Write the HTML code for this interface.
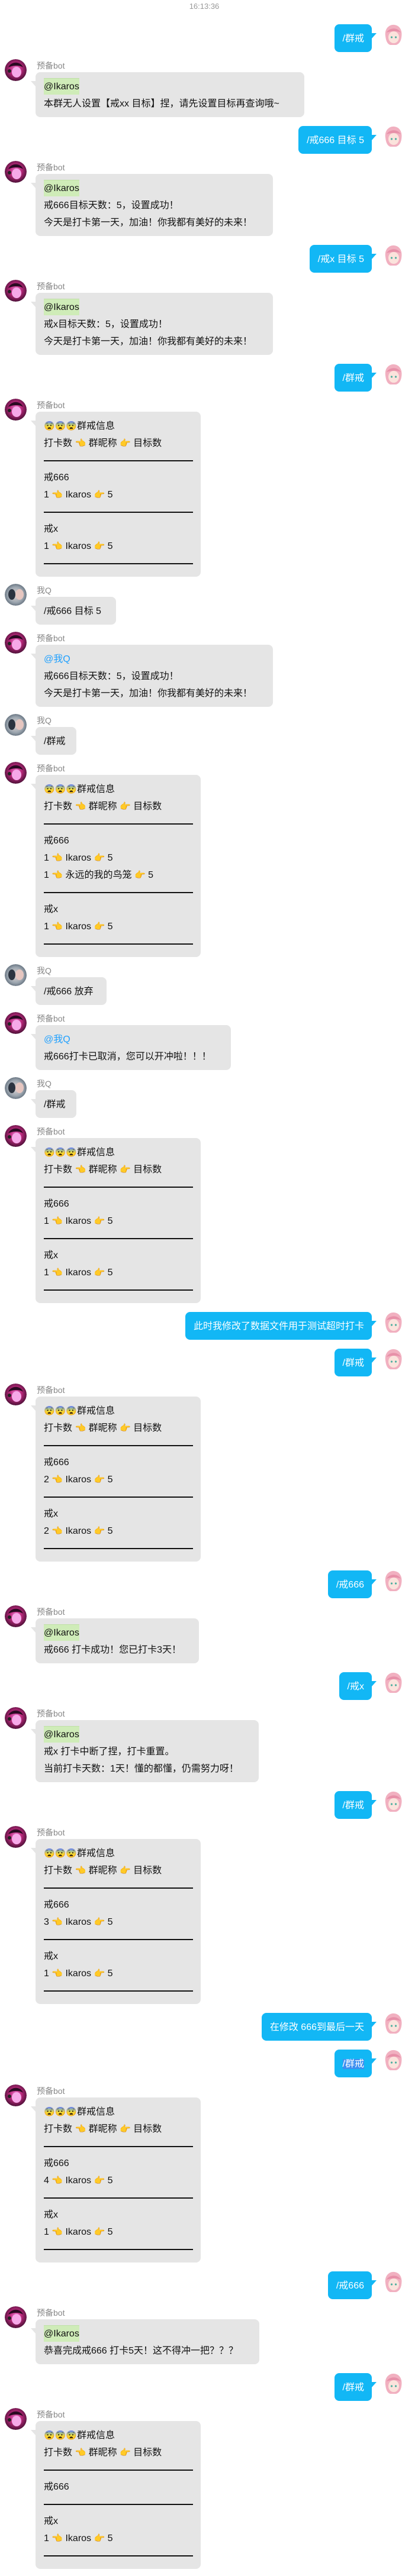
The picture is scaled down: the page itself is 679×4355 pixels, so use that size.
<!DOCTYPE html>
<html><head><meta charset="utf-8">
<style>
*{margin:0;padding:0;box-sizing:border-box}
html,body{width:679px;height:4355px;overflow:hidden;background:#fff}
body{font-family:"Liberation Sans","Noto Sans CJK SC",sans-serif;font-size:16px;color:#111;position:relative}
.ts{position:absolute;top:0;left:0;width:690px;text-align:center;font-size:13px;line-height:22px;color:#999}
.wrap{padding-top:26px}
.b{position:relative;margin-top:12px;padding-left:60px}
.b .av{position:absolute;left:8px;top:0;width:37px;height:37px;border-radius:50%;overflow:hidden}
.nm{height:22px;line-height:22px;font-size:14px;color:#888;padding-left:2px;overflow:hidden}
.bb{position:relative;border-radius:8px;padding:10px 12px 8px 14px;line-height:29px;white-space:nowrap}
.l{height:29px;line-height:29px;overflow:visible}
.l span.e,.l .h{display:inline-block;height:29px;line-height:29px;vertical-align:top;font-size:15px}
.b .bb{background:#e5e5e5;display:block}
.b .bb::before{content:"";position:absolute;left:-8px;top:15px;border-top:9px solid #e5e5e5;border-left:8px solid transparent}
.u{position:relative;margin-top:15px;height:47px}
.u .bb{position:absolute;right:51px;top:0;height:47px;background:#12b7f5;color:#fff;padding:10px 13px 8px 14px}
.u .bb::after{content:"";position:absolute;right:-8px;top:15px;border-top:9px solid #12b7f5;border-right:8px solid transparent}
.u .ua{position:absolute;right:-4px;top:-2px;width:38px;height:40px}
.at{background:#cfecb8;display:inline-block;line-height:27px;height:28px;border-top:1px solid #bfe0a6;vertical-align:top}
.atq{color:#1ea0ff}
.hr{height:29px;position:relative}
.hr::after{content:"";position:absolute;left:0;top:14px;width:252px;height:1.5px;background:#111}
.sel{background:#3d8ff0}
</style></head><body>
<div class="ts">16:13:36</div>

<svg width="0" height="0" style="position:absolute">
<defs>
<radialGradient id="gb" cx="50%" cy="45%" r="60%"><stop offset="0" stop-color="#f07ad0"/><stop offset="0.45" stop-color="#b8287a"/><stop offset="1" stop-color="#3a0c2c"/></radialGradient>
<radialGradient id="gq" cx="50%" cy="50%" r="60%"><stop offset="0" stop-color="#e8dcd8"/><stop offset="0.6" stop-color="#9aa4ae"/><stop offset="1" stop-color="#4a5866"/></radialGradient>
<g id="uav"><path d="M6 22 C4 8 14 2 21 3 C30 4 35 12 33 24 C32 32 28 36 24 37 L14 37 C9 35 7 30 6 22Z" fill="#f1b0c0"/><ellipse cx="20" cy="24" rx="9" ry="10" fill="#fbe3dc"/><path d="M8 16 C12 8 26 6 32 16 C26 13 16 13 8 16Z" fill="#e790a8"/><circle cx="16.5" cy="24" r="1.6" fill="#4fb0a0"/><circle cx="23.5" cy="24" r="1.6" fill="#4fb0a0"/></g>
<g id="bav"><circle cx="18.5" cy="18.5" r="18.5" fill="url(#gb)"/><ellipse cx="20" cy="22" rx="8" ry="9" fill="#f6a8e8"/><path d="M6 14 C10 4 26 2 31 14 C26 10 14 10 6 14Z" fill="#2a0a22"/><circle cx="8" cy="20" r="3" fill="#222"/></g>
<g id="qav"><circle cx="18.5" cy="18.5" r="18.5" fill="url(#gq)"/><ellipse cx="12" cy="18" rx="6" ry="9" fill="#2c3440"/><ellipse cx="25" cy="18" rx="7" ry="9" fill="#e6c6c0"/></g>
</defs></svg>

<div class="wrap">

<div class="u"><div class="bb">/群戒</div><svg class="ua" viewBox="0 0 38 40"><use href="#uav"/></svg></div>

<div class="b"><svg class="av" viewBox="0 0 37 37"><use href="#bav"/></svg><div class="nm">预备bot</div>
<div class="bb" style="width:454px"><div class="l"><span class="at">@Ikaros</span></div><div class="l">本群无人设置【戒xx 目标】捏，请先设置目标再查询哦~</div></div></div>

<div class="u"><div class="bb">/戒666 目标 5</div><svg class="ua" viewBox="0 0 38 40"><use href="#uav"/></svg></div>

<div class="b"><svg class="av" viewBox="0 0 37 37"><use href="#bav"/></svg><div class="nm">预备bot</div>
<div class="bb" style="width:401px"><div class="l"><span class="at">@Ikaros</span></div><div class="l">戒666目标天数：5，设置成功！</div><div class="l">今天是打卡第一天，加油！你我都有美好的未来！</div></div></div>

<div class="u"><div class="bb">/戒x 目标 5</div><svg class="ua" viewBox="0 0 38 40"><use href="#uav"/></svg></div>

<div class="b"><svg class="av" viewBox="0 0 37 37"><use href="#bav"/></svg><div class="nm">预备bot</div>
<div class="bb" style="width:401px"><div class="l"><span class="at">@Ikaros</span></div><div class="l">戒x目标天数：5，设置成功！</div><div class="l">今天是打卡第一天，加油！你我都有美好的未来！</div></div></div>

<div class="u"><div class="bb">/群戒</div><svg class="ua" viewBox="0 0 38 40"><use href="#uav"/></svg></div>

<div class="b"><svg class="av" viewBox="0 0 37 37"><use href="#bav"/></svg><div class="nm">预备bot</div>
<div class="bb" style="width:279px"><div class="l"><span class="e">😨😨😨</span>群戒信息</div><div class="l">打卡数 <span class="h">👈</span> 群昵称 <span class="h">👉</span> 目标数</div><div class="hr"></div><div class="l">戒666</div><div class="l">1 <span class="h">👈</span> Ikaros <span class="h">👉</span> 5</div><div class="hr"></div><div class="l">戒x</div><div class="l">1 <span class="h">👈</span> Ikaros <span class="h">👉</span> 5</div><div class="hr"></div></div></div>

<div class="b"><svg class="av" viewBox="0 0 37 37"><use href="#qav"/></svg><div class="nm">我Q</div>
<div class="bb" style="width:136px"><div class="l">/戒666 目标 5</div></div></div>

<div class="b"><svg class="av" viewBox="0 0 37 37"><use href="#bav"/></svg><div class="nm">预备bot</div>
<div class="bb" style="width:401px"><div class="l"><span class="atq">@我Q</span></div><div class="l">戒666目标天数：5，设置成功！</div><div class="l">今天是打卡第一天，加油！你我都有美好的未来！</div></div></div>

<div class="b"><svg class="av" viewBox="0 0 37 37"><use href="#qav"/></svg><div class="nm">我Q</div>
<div class="bb" style="width:69px"><div class="l">/群戒</div></div></div>

<div class="b"><svg class="av" viewBox="0 0 37 37"><use href="#bav"/></svg><div class="nm">预备bot</div>
<div class="bb" style="width:279px"><div class="l"><span class="e">😨😨😨</span>群戒信息</div><div class="l">打卡数 <span class="h">👈</span> 群昵称 <span class="h">👉</span> 目标数</div><div class="hr"></div><div class="l">戒666</div><div class="l">1 <span class="h">👈</span> Ikaros <span class="h">👉</span> 5</div><div class="l">1 <span class="h">👈</span> 永远的我的鸟笼 <span class="h">👉</span> 5</div><div class="hr"></div><div class="l">戒x</div><div class="l">1 <span class="h">👈</span> Ikaros <span class="h">👉</span> 5</div><div class="hr"></div></div></div>

<div class="b"><svg class="av" viewBox="0 0 37 37"><use href="#qav"/></svg><div class="nm">我Q</div>
<div class="bb" style="width:120px"><div class="l">/戒666 放弃</div></div></div>

<div class="b"><svg class="av" viewBox="0 0 37 37"><use href="#bav"/></svg><div class="nm">预备bot</div>
<div class="bb" style="width:330px"><div class="l"><span class="atq">@我Q</span></div><div class="l">戒666打卡已取消，您可以开冲啦！！！</div></div></div>

<div class="b"><svg class="av" viewBox="0 0 37 37"><use href="#qav"/></svg><div class="nm">我Q</div>
<div class="bb" style="width:69px"><div class="l">/群戒</div></div></div>

<div class="b"><svg class="av" viewBox="0 0 37 37"><use href="#bav"/></svg><div class="nm">预备bot</div>
<div class="bb" style="width:279px"><div class="l"><span class="e">😨😨😨</span>群戒信息</div><div class="l">打卡数 <span class="h">👈</span> 群昵称 <span class="h">👉</span> 目标数</div><div class="hr"></div><div class="l">戒666</div><div class="l">1 <span class="h">👈</span> Ikaros <span class="h">👉</span> 5</div><div class="hr"></div><div class="l">戒x</div><div class="l">1 <span class="h">👈</span> Ikaros <span class="h">👉</span> 5</div><div class="hr"></div></div></div>

<div class="u"><div class="bb">此时我修改了数据文件用于测试超时打卡</div><svg class="ua" viewBox="0 0 38 40"><use href="#uav"/></svg></div>

<div class="u"><div class="bb">/群戒</div><svg class="ua" viewBox="0 0 38 40"><use href="#uav"/></svg></div>

<div class="b"><svg class="av" viewBox="0 0 37 37"><use href="#bav"/></svg><div class="nm">预备bot</div>
<div class="bb" style="width:279px"><div class="l"><span class="e">😨😨😨</span>群戒信息</div><div class="l">打卡数 <span class="h">👈</span> 群昵称 <span class="h">👉</span> 目标数</div><div class="hr"></div><div class="l">戒666</div><div class="l">2 <span class="h">👈</span> Ikaros <span class="h">👉</span> 5</div><div class="hr"></div><div class="l">戒x</div><div class="l">2 <span class="h">👈</span> Ikaros <span class="h">👉</span> 5</div><div class="hr"></div></div></div>

<div class="u"><div class="bb">/戒666</div><svg class="ua" viewBox="0 0 38 40"><use href="#uav"/></svg></div>

<div class="b"><svg class="av" viewBox="0 0 37 37"><use href="#bav"/></svg><div class="nm">预备bot</div>
<div class="bb" style="width:276px"><div class="l"><span class="at">@Ikaros</span></div><div class="l">戒666 打卡成功！您已打卡3天！</div></div></div>

<div class="u"><div class="bb">/戒x</div><svg class="ua" viewBox="0 0 38 40"><use href="#uav"/></svg></div>

<div class="b"><svg class="av" viewBox="0 0 37 37"><use href="#bav"/></svg><div class="nm">预备bot</div>
<div class="bb" style="width:377px"><div class="l"><span class="at">@Ikaros</span></div><div class="l">戒x 打卡中断了捏，打卡重置。</div><div class="l">当前打卡天数：1天！懂的都懂，仍需努力呀！</div></div></div>

<div class="u"><div class="bb">/群戒</div><svg class="ua" viewBox="0 0 38 40"><use href="#uav"/></svg></div>

<div class="b"><svg class="av" viewBox="0 0 37 37"><use href="#bav"/></svg><div class="nm">预备bot</div>
<div class="bb" style="width:279px"><div class="l"><span class="e">😨😨😨</span>群戒信息</div><div class="l">打卡数 <span class="h">👈</span> 群昵称 <span class="h">👉</span> 目标数</div><div class="hr"></div><div class="l">戒666</div><div class="l">3 <span class="h">👈</span> Ikaros <span class="h">👉</span> 5</div><div class="hr"></div><div class="l">戒x</div><div class="l">1 <span class="h">👈</span> Ikaros <span class="h">👉</span> 5</div><div class="hr"></div></div></div>

<div class="u"><div class="bb">在修改 666到最后一天</div><svg class="ua" viewBox="0 0 38 40"><use href="#uav"/></svg></div>

<div class="u"><div class="bb"><span class="sel">/群戒</span></div><svg class="ua" viewBox="0 0 38 40"><use href="#uav"/></svg></div>

<div class="b"><svg class="av" viewBox="0 0 37 37"><use href="#bav"/></svg><div class="nm">预备bot</div>
<div class="bb" style="width:279px"><div class="l"><span class="e">😨😨😨</span>群戒信息</div><div class="l">打卡数 <span class="h">👈</span> 群昵称 <span class="h">👉</span> 目标数</div><div class="hr"></div><div class="l">戒666</div><div class="l">4 <span class="h">👈</span> Ikaros <span class="h">👉</span> 5</div><div class="hr"></div><div class="l">戒x</div><div class="l">1 <span class="h">👈</span> Ikaros <span class="h">👉</span> 5</div><div class="hr"></div></div></div>

<div class="u"><div class="bb">/戒666</div><svg class="ua" viewBox="0 0 38 40"><use href="#uav"/></svg></div>

<div class="b"><svg class="av" viewBox="0 0 37 37"><use href="#bav"/></svg><div class="nm">预备bot</div>
<div class="bb" style="width:378px"><div class="l"><span class="at">@Ikaros</span></div><div class="l">恭喜完成戒666 打卡5天！这不得冲一把？？？</div></div></div>

<div class="u"><div class="bb">/群戒</div><svg class="ua" viewBox="0 0 38 40"><use href="#uav"/></svg></div>

<div class="b"><svg class="av" viewBox="0 0 37 37"><use href="#bav"/></svg><div class="nm">预备bot</div>
<div class="bb" style="width:279px"><div class="l"><span class="e">😨😨😨</span>群戒信息</div><div class="l">打卡数 <span class="h">👈</span> 群昵称 <span class="h">👉</span> 目标数</div><div class="hr"></div><div class="l">戒666</div><div class="hr"></div><div class="l">戒x</div><div class="l">1 <span class="h">👈</span> Ikaros <span class="h">👉</span> 5</div><div class="hr"></div></div></div>

</div>
</body></html>
